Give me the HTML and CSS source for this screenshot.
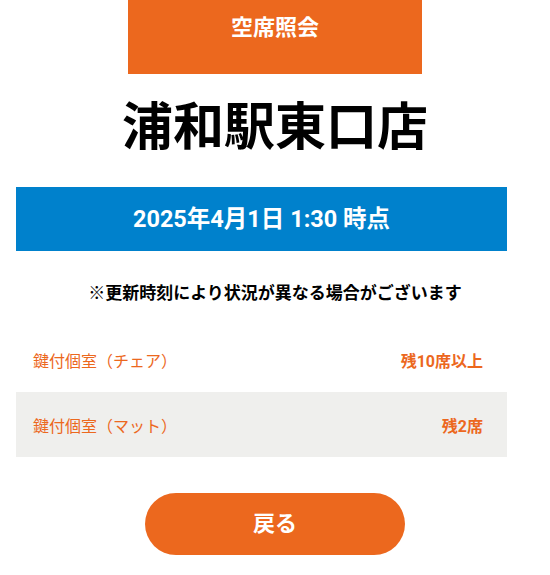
FILE: index.html
```html
<!DOCTYPE html>
<html lang="ja">
<head>
    <meta charset="UTF-8">
    <meta name="viewport" content="width=device-width, initial-scale=1.0">
    <title>空席照会 | 浦和駅東口店</title>
    <link rel="stylesheet" href="styles.css">
</head>
<body>
    <div class="page">
        <div class="page-label">空席照会</div>
        <h1 class="shop-name">浦和駅東口店</h1>

        <div class="time-bar">2025年4月1日 1:30 時点</div>
        <p class="notice">※更新時刻により状況が異なる場合がございます</p>

        <ul class="seat-list">
            <li class="seat-row">
                <span class="seat-name">鍵付個室（チェア）</span>
                <span class="seat-left">残10席以上</span>
            </li>
            <li class="seat-row">
                <span class="seat-name">鍵付個室（マット）</span>
                <span class="seat-left">残2席</span>
            </li>
        </ul>

        <div class="actions">
            <a href="#" class="back-btn">戻る</a>
        </div>
    </div>
</body>
</html>
```

FILE: styles.css
```css
* {
    margin: 0;
    padding: 0;
    box-sizing: border-box;
}

body {
    font-family: Roboto, "Noto Sans CJK JP", sans-serif;
    background: #fff;
    color: #000;
}

.page {
    width: 550px;
    display: flex;
    flex-direction: column;
}

.page-label {
    align-self: center;
    width: 294px;
    height: 74px;
    padding-top: 12px;
    background: #ec681e;
    color: #fff;
    font-size: 22px;
    font-weight: bold;
    line-height: 32px;
    text-align: center;
}

.shop-name {
    margin-top: 22px;
    height: 64px;
    font-size: 51px;
    line-height: 64px;
    font-weight: bold;
    text-align: center;
}

.time-bar {
    margin: 27px 0 0 16px;
    width: 491px;
    height: 64px;
    background: #0081cc;
    color: #fff;
    font-size: 23.5px;
    font-weight: bold;
    line-height: 64px;
    text-align: center;
}

.notice {
    margin-top: 30px;
    font-size: 17px;
    font-weight: bold;
    line-height: 24px;
    text-align: center;
}

.seat-list {
    list-style: none;
    margin: 22px 0 0 16px;
    width: 491px;
}

.seat-row {
    display: flex;
    justify-content: space-between;
    align-items: center;
    height: 65px;
    padding: 0 24px 0 17px;
    color: #ec681e;
    font-size: 16px;
}

.seat-row:nth-child(even) {
    background: #efefed;
}

.seat-left {
    font-weight: bold;
}

.actions {
    display: flex;
    justify-content: center;
    margin-top: 36px;
}

.back-btn {
    display: block;
    width: 260px;
    height: 62px;
    border-radius: 31px;
    background: #ec681e;
    color: #fff;
    font-size: 22px;
    font-weight: bold;
    line-height: 62px;
    text-align: center;
    text-decoration: none;
}
```
